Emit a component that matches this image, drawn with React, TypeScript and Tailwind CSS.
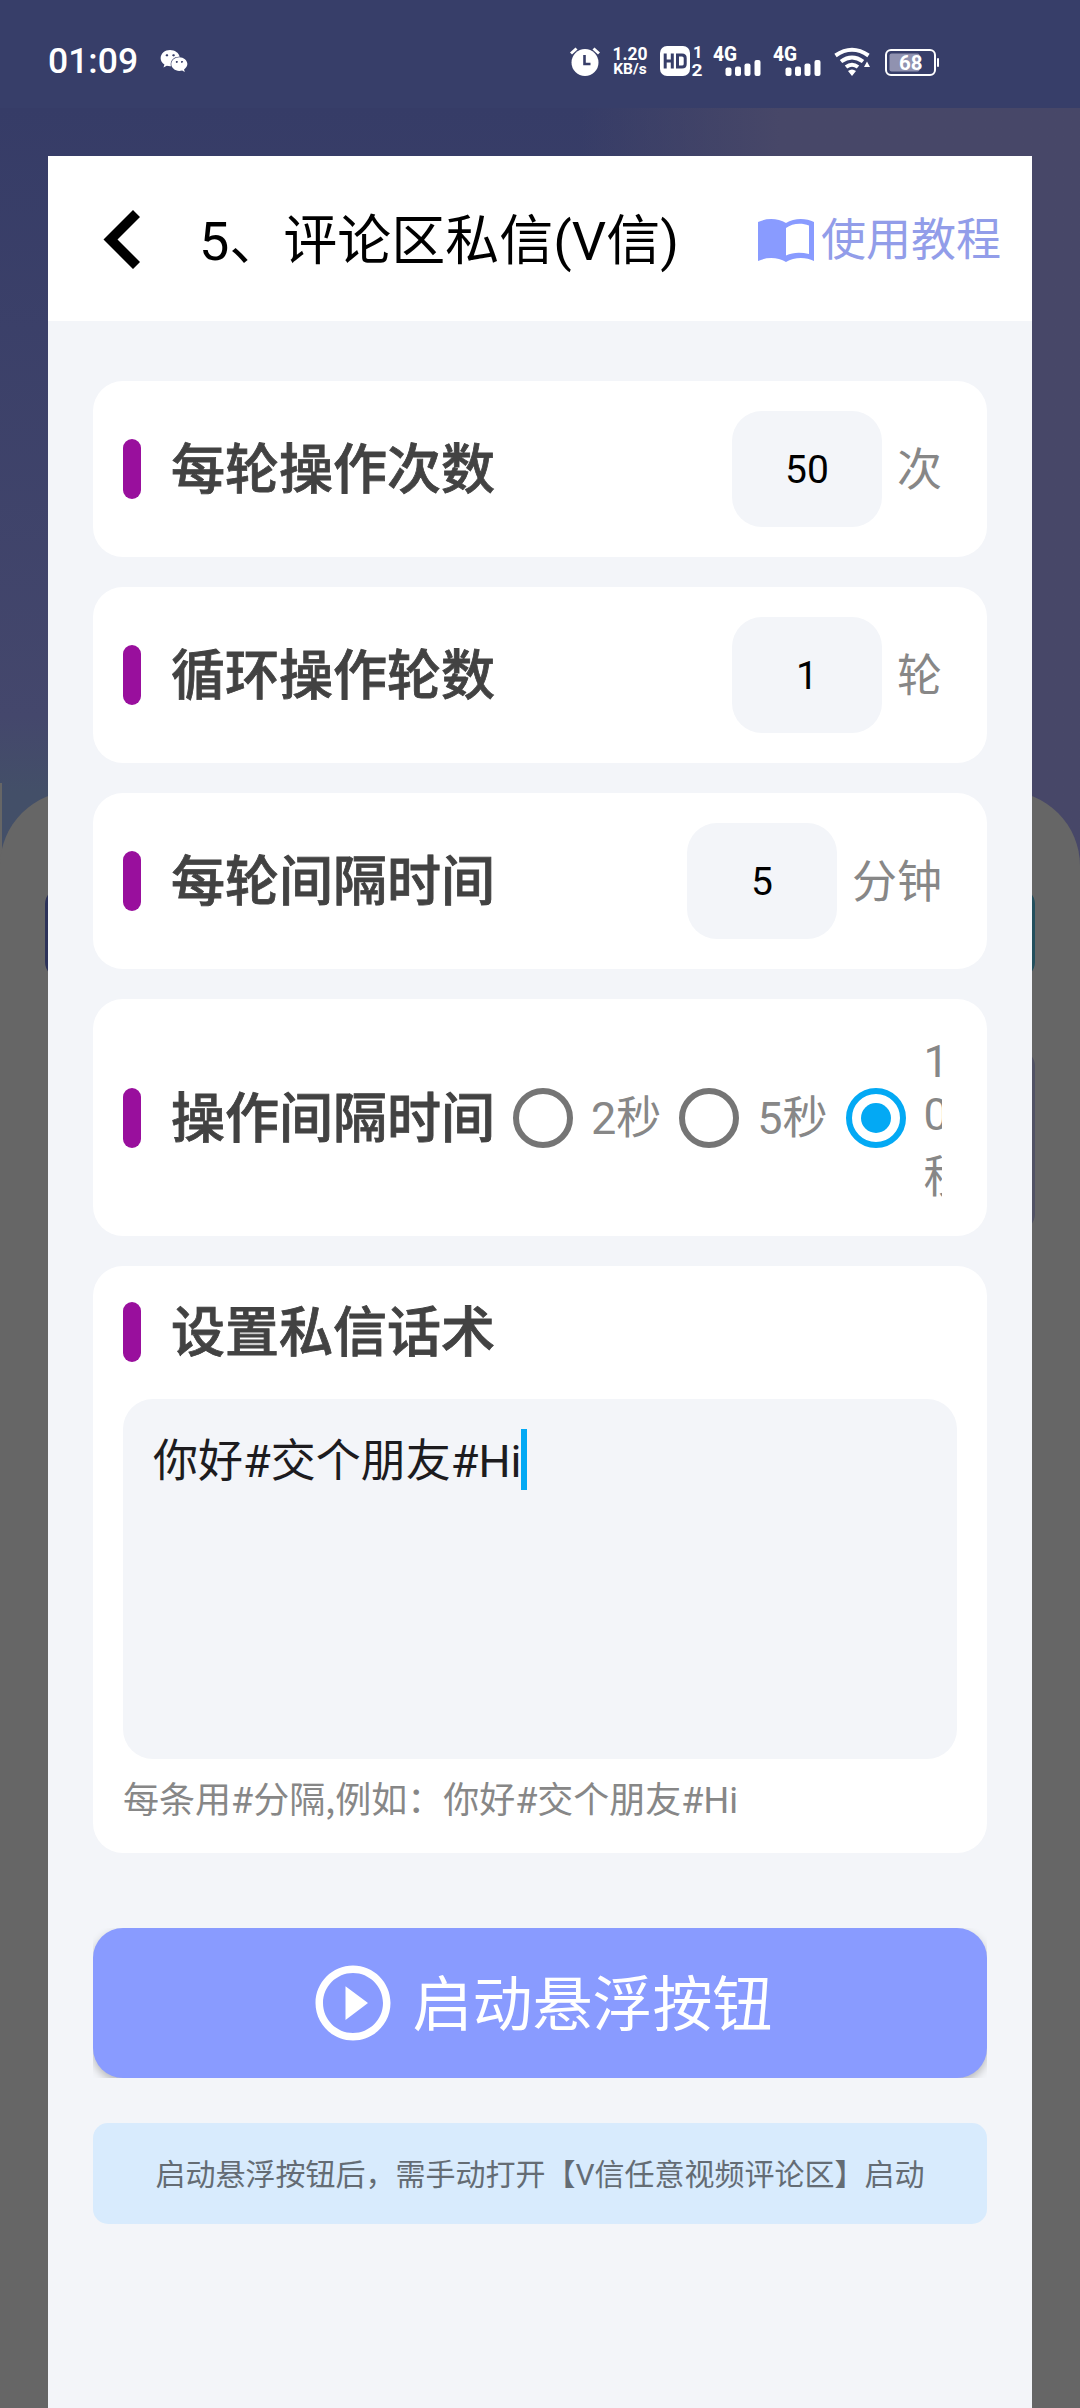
import { useState } from "react";
import { FaWeixin } from "react-icons/fa";
import { clsx } from "clsx";

const intervals = ["2秒", "5秒", "10秒"];

function SignalIcon() {
  return (
    <svg className="overflow-visible" width="48" height="30" viewBox="0 0 48 30" fill="#fff">
      <text x="0" y="14.5" fontSize="20" fontWeight="800" fontFamily="Roboto" textLength="24" lengthAdjust="spacingAndGlyphs">
        4G
      </text>
      <rect x="12.5" y="21.5" width="6" height="8.5" rx="2" />
      <rect x="22" y="20.5" width="6" height="9.5" rx="2" />
      <rect x="31.5" y="17.5" width="6" height="12.5" rx="2" />
      <rect x="41.5" y="14" width="6" height="16" rx="2" />
    </svg>
  );
}

function StatusBar() {
  return (
    <div className="flex h-[156px] w-full items-start pt-[46px] text-white">
      <span className="ml-12 w-28 text-[35.5px] leading-[30px] font-medium">01:09</span>
      <FaWeixin className="mt-[2px] h-[26px] w-[28px]" />

      <div className="ml-[382px] flex items-start">
        <svg width="30" height="30" viewBox="0 0 30 30">
          <circle cx="15" cy="16.5" r="13.5" fill="#fff" />
          <path d="M1 7.5 6.5 2.5M29 7.5 23.5 2.5" stroke="#fff" strokeWidth="3" />
          <path d="M14.5 9V18H20.5" fill="none" stroke="#373e69" strokeWidth="2.6" />
        </svg>
        <div className="ml-[12px] flex w-[36px] flex-col items-center font-bold">
          <span className="text-[17.5px] leading-4">1.20</span>
          <span className="text-[15.5px] leading-[14px]">KB/s</span>
        </div>
        <svg className="ml-[12px] overflow-visible" width="43" height="30" viewBox="0 0 43 30">
          <rect width="30" height="30" rx="7" fill="#fff" />
          <path d="M5.2 7.5V22.5M12.3 7.5V22.5M5 15H12.5M17.5 9H22Q25.2 9 25.2 12V18Q25.2 21 22 21H17.5Z" fill="none" stroke="#373e69" strokeWidth="3" />
          <g fill="#fff" fontFamily="Roboto" fontWeight="700" fontSize="16.5">
            <text x="33" y="11.5">1</text>
            <text x="31.5" y="29.5" textLength="11" lengthAdjust="spacingAndGlyphs">2</text>
          </g>
        </svg>
        <div className="ml-[10px] flex gap-3">
          <SignalIcon />
          <SignalIcon />
        </div>
        <svg className="ml-[13px]" width="36" height="30" viewBox="0 0 36 30">
          <g fill="none" stroke="#fff" strokeWidth="4">
            <path d="M1.5 9.5Q18-2 34.5 9.5" />
            <path d="M7 15.5Q18 7.5 29 15.5" />
            <path d="M12 21Q18 16.5 24 21" />
          </g>
          <path d="M14 25Q18 22 22 25L18 30ZM33 15.5 36 21H30Z" fill="#fff" />
        </svg>
        <svg className="ml-[15px] overflow-visible" width="55" height="30" viewBox="0 0 55 30">
          <rect x="1" y="4" width="49" height="25" rx="5" fill="none" stroke="#fff" strokeWidth="2" />
          <rect x="4.5" y="7.5" width="30" height="18" rx="2" fill="#9092b0" />
          <rect x="52" y="12" width="2" height="9" rx="1" fill="#fff" />
          <text x="14" y="24" fontSize="20.5" fontWeight="700" fontFamily="Roboto" fill="#fff">
            68
          </text>
        </svg>
      </div>
    </div>
  );
}

// Home page that stays visible, dimmed, around the panel
function DimmedPage() {
  return (
    <div className="absolute inset-0 -z-10 overflow-hidden bg-[#373e69]">
      <div className="absolute inset-x-0 top-[108px] h-[760px] bg-linear-to-b from-[#363c67] via-[#44476c] via-80% to-[#434f68] to-90%" />
      <div className="absolute top-[108px] right-0 h-[760px] w-[500px] bg-linear-to-r from-[#363d6800] to-[#474768] to-40%" />
      <div className="absolute top-[783px] left-0 h-[90px] w-[2px] bg-[#666666]" />
      <div className="absolute inset-x-0 top-[791px] bottom-0 rounded-t-[75px] bg-[#666666]" />
      <div className="absolute top-[888px] left-[45px] h-[90px] w-[990px] rounded-2xl bg-linear-to-r from-[#2c3259] to-[#234f5d]" />
      <div className="absolute top-[1050px] right-[45px] h-[180px] w-[400px] rounded-2xl bg-[#515264]" />
    </div>
  );
}

function Title({ children }: { children: string }) {
  return (
    <div className="flex h-[66px] shrink-0 items-center">
      <span className="h-[60px] w-[18px] rounded-full bg-[#990f9d]" />
      <h2 className="ml-[30px] pt-1 text-[54px] leading-[60px] font-medium whitespace-nowrap text-[#424242] [-webkit-text-stroke:0.8px]">
        {children}
      </h2>
    </div>
  );
}

interface NumberRowProps {
  label: string;
  unit: string;
  defaultValue: string;
}

function NumberRow({ label, unit, defaultValue }: NumberRowProps) {
  const [value, setValue] = useState(defaultValue);

  return (
    <div className="flex h-[176px] items-center rounded-[30px] bg-white pr-[45px] pl-[30px]">
      <Title>{label}</Title>
      <input
        value={value}
        onChange={(e) => setValue(e.target.value)}
        className="ml-auto h-[116px] w-[150px] rounded-[30px] bg-[#f3f5f9] pt-[2px] text-center text-[39px] text-black outline-none"
      />
      <span className="ml-[15px] pt-[3px] text-[45px] leading-[60px] text-[#878787]">{unit}</span>
    </div>
  );
}

function Radio({ checked, onClick }: { checked: boolean; onClick: () => void }) {
  return (
    <button
      onClick={onClick}
      className={clsx(
        "flex size-[60px] shrink-0 items-center justify-center rounded-full border-[6px]",
        checked ? "border-[#03a9f4]" : "border-[#757575]"
      )}
    >
      {checked && <span className="size-[30px] rounded-full bg-[#03a9f4]" />}
    </button>
  );
}

export default function App() {
  const [interval, setInterval] = useState("10秒");

  return (
    <div className="relative isolate flex h-[2408px] w-[1080px] flex-col overflow-hidden font-['Roboto','Noto_Sans_CJK_SC',sans-serif]">
      <DimmedPage />
      <StatusBar />

      <main className="mx-12 flex-1 bg-[#f3f5f9]">
        <header className="flex h-[165px] items-center bg-white pr-[31px] pl-[55px]">
          <svg width="38" height="60" viewBox="0 0 38 60">
            <path d="M30 1 37 8 14.5 30.5 37 53 30 60 .5 30.5Z" />
          </svg>
          <h1 className="ml-[58px] pt-[6px] text-[54px] leading-[64px] whitespace-nowrap text-black">5、评论区私信(V信)</h1>
          <button className="ml-auto flex items-center text-[45px] leading-[60px] text-[#929de9]">
            <svg className="mt-[3px] mr-[7px]" width="56" height="43" viewBox="0 0 56 43">
              <path
                fillRule="evenodd"
                fill="#899bff"
                d="M0 3C8-1 20-1 28 4 36-1 48-1 56 3V42C48 38 36 38 28 43 20 38 8 38 0 42ZM28 9V36.5C35 33 43 33 51 35V6.5C43 3.500 34 4.500 28 9Z"
              />
            </svg>
            <span className="pt-1">使用教程</span>
          </button>
        </header>

        <div className="px-[45px] pt-[60px]">
          <div className="flex flex-col gap-[30px]">
            <NumberRow label="每轮操作次数" unit="次" defaultValue="50" />
            <NumberRow label="循环操作轮数" unit="轮" defaultValue="1" />
            <NumberRow label="每轮间隔时间" unit="分钟" defaultValue="5" />

            <div className="flex h-[237px] items-center rounded-[30px] bg-white pr-[45px] pl-[30px]">
              <Title>操作间隔时间</Title>
              <div className="flex min-w-0 flex-1 items-center overflow-hidden">
                {intervals.map((item) => (
                  <div key={item} className="ml-[18px] flex shrink-0 items-center text-[45px] text-[#878787]">
                    <Radio checked={interval === item} onClick={() => setInterval(item)} />
                    {item.length > 2 ? (
                      <span className="ml-[18px] flex h-[177px] flex-col pt-[6px] leading-[53px]">
                        <span>1</span>
                        <span>0</span>
                        <span className="leading-[73px]">秒</span>
                      </span>
                    ) : (
                      <span className="ml-[18px] pt-[3px] leading-[60px]">{item}</span>
                    )}
                  </div>
                ))}
              </div>
            </div>

            <div className="h-[587px] rounded-[30px] bg-white px-[30px] pt-[33px]">
              <Title>设置私信话术</Title>
              <div className="mt-[34px] flex h-[360px] items-start rounded-[30px] bg-[#f3f5f9] p-[30px]">
                <span className="pt-[3px] text-[45px] leading-[60px] text-[#1d1c1f]">你好#交个朋友#Hi</span>
                <span className="h-[61px] w-[6px] bg-[#03a9f4]" />
              </div>
              <p className="mt-[13px] text-[36px] leading-[50px] text-[#878787]">
                每条用#分隔<span className="font-['Noto_Sans_CJK_SC',sans-serif]">,</span>例如：你好#交个朋友#Hi
              </p>
            </div>
          </div>

          <div className="mt-[75px] overflow-hidden">
            <button className="flex h-[150px] w-full items-center justify-center rounded-[30px] bg-[#899bff] text-[60px] leading-[80px] text-white shadow-[0_4px_8px_rgba(0,0,0,0.25)]">
              <svg className="mr-[15px]" width="90" height="90" viewBox="0 0 24 24" fill="#fff">
                <path d="M10 16.5l6-4.5-6-4.5v9zM12 2C6.48 2 2 6.48 2 12s4.48 10 10 10 10-4.48 10-10S17.52 2 12 2zm0 18c-4.41 0-8-3.59-8-8s3.59-8 8-8 8 3.59 8 8-3.59 8-8 8z" />
              </svg>
              <span className="pt-[5px]">启动悬浮按钮</span>
            </button>
          </div>

          <p className="mt-[45px] flex h-[101px] items-center justify-center rounded-[15px] bg-[#d8ebfd] pt-[2px] text-[30px] whitespace-nowrap text-[#646c74]">
            启动悬浮按钮后，需手动打开【V信任意视频评论区】启动
          </p>
        </div>
      </main>
    </div>
  );
}
